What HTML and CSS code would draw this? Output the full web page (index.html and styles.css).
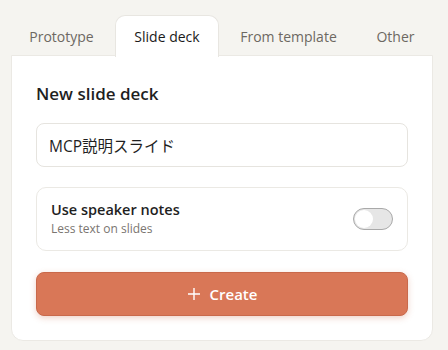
FILE: index.html
```html
<!DOCTYPE html>
<html lang="en">
<head>
    <meta charset="UTF-8">
    <meta name="viewport" content="width=device-width, initial-scale=1.0">
    <title>New slide deck</title>
    <link rel="stylesheet" href="styles.css">
</head>
<body>
    <div class="tabs">
        <div class="tab">Prototype</div>
        <div class="tab active">Slide deck</div>
        <div class="tab">From template</div>
        <div class="tab">Other</div>
    </div>

    <div class="panel">
        <h2>New slide deck</h2>
        <input class="title-input" type="text" value="MCP説明スライド">

        <div class="option">
            <div class="option-text">
                <div class="option-title">Use speaker notes</div>
                <div class="option-sub">Less text on slides</div>
            </div>
            <div class="toggle"><span class="knob"></span></div>
        </div>

        <button class="create-btn">
            <svg width="14" height="14" viewBox="0 0 14 14"><path d="M7 1v12M1 7h12" stroke="#fff" stroke-width="1.4" fill="none"/></svg>
            Create
        </button>
    </div>
</body>
</html>
```

FILE: styles.css
```css
body {
    font-family: "Open Sans", "Noto Sans CJK JP", sans-serif;
    margin: 0;
    padding: 15px 15px 0 11px;
    background-color: #f5f4f0;
    color: #1f1f1f;
}
.tabs {
    display: flex;
    gap: 2px;
    margin-left: -1px;
    height: 40px;
    position: relative;
    z-index: 1;
}
.tab {
    flex: none;
    white-space: nowrap;
    text-align: center;
    font-size: 14px;
    line-height: 42px;
    color: #6d6862;
    border: 1px solid transparent;
    border-bottom: none;
    border-radius: 10px 10px 0 0;
}
.tab:nth-child(1) { width: 101px; }
.tab:nth-child(2) { width: 102px; }
.tab:nth-child(3) { width: 133px; }
.tab:nth-child(4) { width: 73px; }
.tab.active {
    background-color: #fff;
    border-color: #e8e6e1;
    color: #1a1a1a;
    height: 41px;
}
.panel {
    background-color: #fff;
    border: 1px solid #ebe9e4;
    border-radius: 0 0 12px 12px;
    padding: 25px 24px 24px 24px;
}
.panel h2 {
    margin: 0 0 16px;
    font-size: 17px;
    font-weight: 600;
    line-height: 26px;
}
.title-input {
    display: block;
    box-sizing: border-box;
    width: 100%;
    height: 44px;
    padding: 1px 12px 0;
    border: 1px solid #e6e4df;
    border-radius: 8px;
    font-family: "Open Sans", "Noto Sans CJK JP", sans-serif;
    font-size: 15.5px;
    color: #1f1f1f;
    outline: none;
}
.option {
    display: flex;
    align-items: center;
    justify-content: space-between;
    height: 64px;
    box-sizing: border-box;
    margin-top: 20px;
    padding: 0 14px;
    border: 1px solid #ebe9e4;
    border-radius: 10px;
}
.option-title {
    font-size: 14.5px;
    font-weight: 600;
    line-height: 20px;
}
.option-sub {
    font-size: 12px;
    color: #7a7570;
    line-height: 18px;
}
.toggle {
    width: 38px;
    height: 20px;
    border: 1.5px solid #a9a9a9;
    border-radius: 12px;
    background-color: #e6e6e6;
    position: relative;
}
.knob {
    position: absolute;
    left: 1px;
    top: 1px;
    width: 18px;
    height: 18px;
    border-radius: 50%;
    background-color: #fff;
}
.create-btn {
    display: flex;
    align-items: center;
    justify-content: center;
    gap: 9px;
    width: 100%;
    height: 44px;
    margin-top: 21px;
    border: 1px solid #c9694b;
    border-radius: 8px;
    background-color: #d97757;
    color: #fff;
    font-family: "Open Sans", sans-serif;
    font-size: 15px;
    font-weight: 600;
    box-shadow: 0 2px 6px rgba(201, 105, 75, 0.3);
}
```
